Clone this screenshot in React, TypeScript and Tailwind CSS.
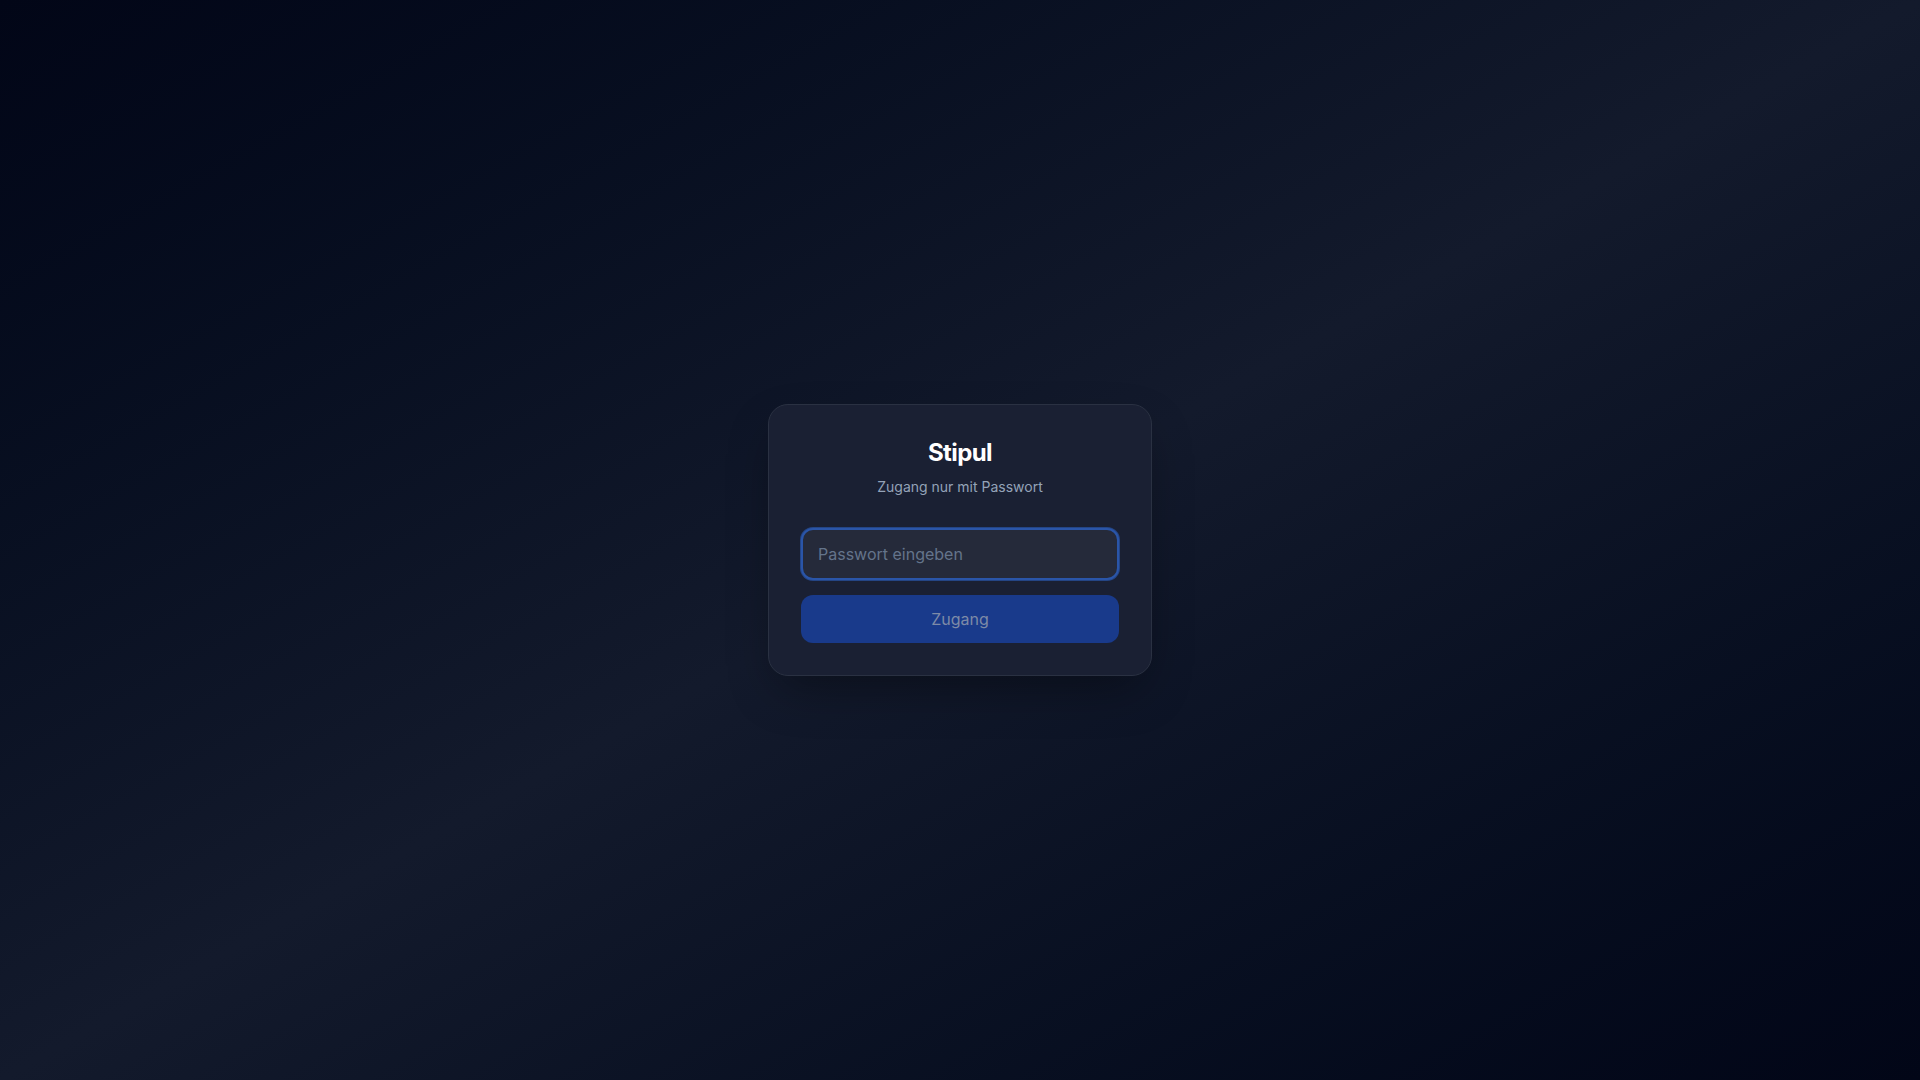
import { useState } from 'react';

export default function App() {
  const [password, setPassword] = useState('');

  const handleSubmit = (e: React.FormEvent) => {
    e.preventDefault();
  };

  return (
    <div className="min-h-screen w-full flex items-center justify-center bg-gradient-to-br from-[#020617] via-[#131a2c] to-[#020617] font-['Inter','Noto_Sans',sans-serif]">
      <div className="w-96 p-8 rounded-[20px] border border-[#2a3142] bg-[#1a2033] shadow-[0_20px_50px_-12px_rgba(0,0,0,0.4)]">
        <div className="text-center">
          <h1 className="text-2xl font-bold tracking-tight text-white">Stipul</h1>
          <p className="mt-2 text-sm text-[#94a3b8]">Zugang nur mit Passwort</p>
        </div>

        <form onSubmit={handleSubmit} className="mt-[31px] flex flex-col gap-[15px]">
          <input
            type="password"
            value={password}
            onChange={e => setPassword(e.target.value)}
            placeholder="Passwort eingeben"
            className="w-full px-[15px] py-3 text-base leading-6 rounded-xl bg-[#252a3a] border-2 border-[#2a55a8] ring-1 ring-[#2a55a8]/70 text-white placeholder:text-[#64748b] outline-none"
          />
          <button
            type="submit"
            disabled={!password}
            className="w-full py-3 text-base leading-6 rounded-xl bg-[#193a8b] text-[#7d8aa7]"
          >
            Zugang
          </button>
        </form>
      </div>
    </div>
  );
}
